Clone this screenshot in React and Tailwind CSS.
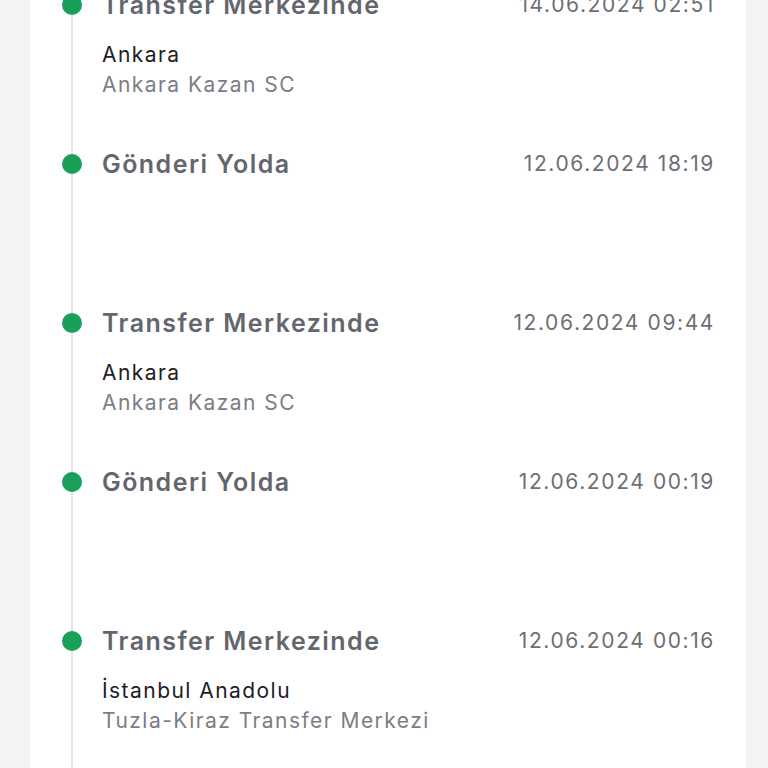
import React from 'react';

const events = [
  { title: 'Transfer Merkezinde', date: '14.06.2024 02:51', city: 'Ankara', place: 'Ankara Kazan SC' },
  { title: 'Gönderi Yolda', date: '12.06.2024 18:19' },
  { title: 'Transfer Merkezinde', date: '12.06.2024 09:44', city: 'Ankara', place: 'Ankara Kazan SC' },
  { title: 'Gönderi Yolda', date: '12.06.2024 00:19' },
  { title: 'Transfer Merkezinde', date: '12.06.2024 00:16', city: 'İstanbul Anadolu', place: 'Tuzla-Kiraz Transfer Merkezi' },
];

export default function App() {
  return (
    <div className="h-[768px] overflow-hidden bg-[#f3f4f6] pl-[30px] pr-[22px] font-['Inter',sans-serif]">
      <div className="flex h-full flex-col bg-white pl-[32px] pr-[31px]">
        <div className="relative mt-[-11px]">
          {/* vertical line */}
          <div className="absolute left-[9px] top-0 h-[900px] w-[2px] bg-[#e3e5e8]" />
          {events.map((ev, i) => (
            <div key={i} className="relative h-[159px] pl-[40px]">
              <div className="absolute left-0 top-[6px] h-[20px] w-[20px] rounded-full bg-[#18a058]" />
              <div className="flex items-start justify-between">
                <h3 className="text-[25px] leading-[33px] font-semibold tracking-[1.45px] text-[#62666d]">{ev.title}</h3>
                <span className="text-[21px] leading-[31px] tracking-[1.6px] text-[#6b6f76]">{ev.date}</span>
              </div>
              {ev.city && (
                <div className="mt-[18px]">
                  <p className="text-[21px] leading-[30px] tracking-[1.45px] text-[#1d2127]">{ev.city}</p>
                  <p className="text-[21px] leading-[30px] tracking-[1.45px] text-[#7a7e85]">{ev.place}</p>
                </div>
              )}
            </div>
          ))}
        </div>
      </div>
    </div>
  );
}
